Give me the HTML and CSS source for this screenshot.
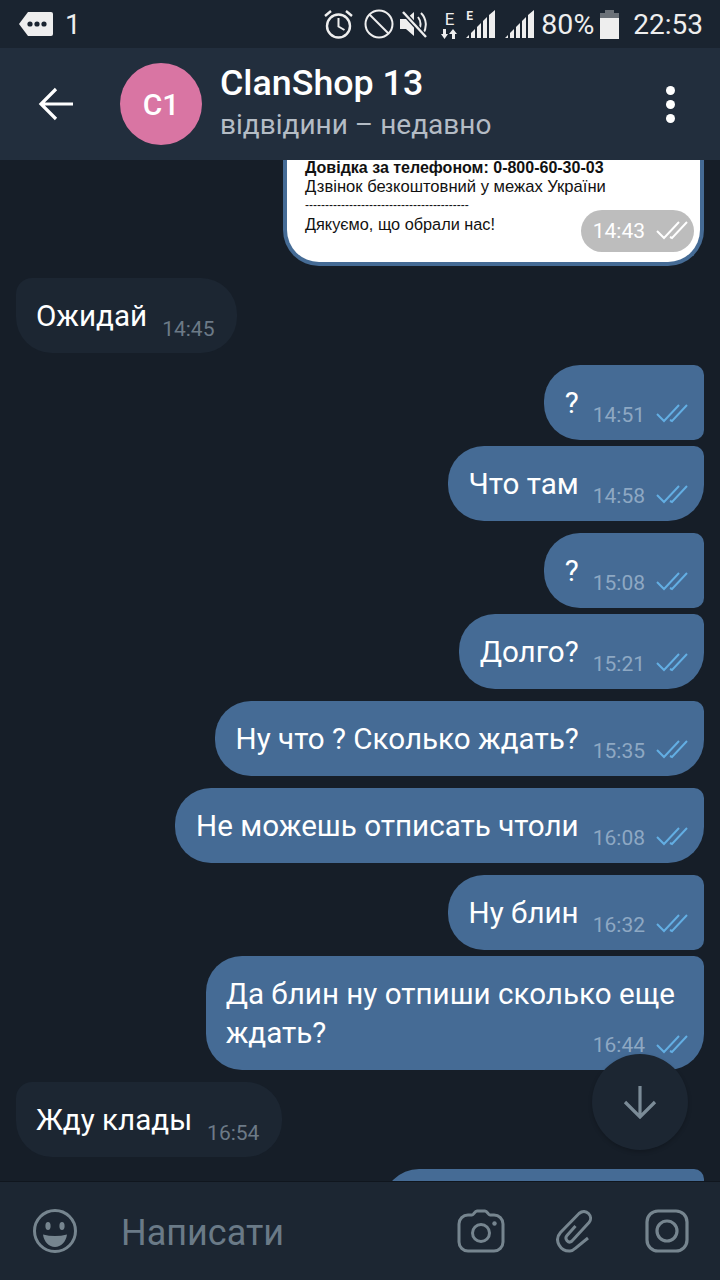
FILE: index.html
```html
<!DOCTYPE html>
<html lang="en">
<head>
  <meta charset="UTF-8" />
  <meta name="viewport" content="width=device-width, initial-scale=1.0" />
  <title>ClanShop 13</title>
  <link rel="stylesheet" href="styles.css">
</head>
<body>
  <svg class="sprite" width="0" height="0">
    <symbol id="ticks" viewBox="0 0 32 20">
      <path d="M1 11l7 7L23 2M14 17l2 1L31 2" fill="none" stroke="currentColor" stroke-width="2"/>
    </symbol>
    <symbol id="bars" viewBox="0 0 30 28">
      <path d="M0 28l3-3v3zM5 28v-5l4-4v9zM11 28V17l4-4v15zM17 28V11l4-4v21zM23 28V5l6-5v28z" fill="#eee"/>
    </symbol>
  </svg>

  <div class="app">
    <div class="statusbar">
      <div class="status-left">
        <svg class="st-note" viewBox="0 0 34 26"><path d="M9 1h23a2 2 0 0 1 2 2v20a2 2 0 0 1-2 2H9L0 13z" fill="#eee"/><circle cx="11" cy="13" r="2.6" fill="#1a2430"/><circle cx="18" cy="13" r="2.6" fill="#1a2430"/><circle cx="25" cy="13" r="2.6" fill="#1a2430"/></svg>
        <span>1</span>
      </div>
      <div class="status-right">
        <svg class="st-alarm" viewBox="0 0 29 30"><circle cx="14.5" cy="17" r="11.5" fill="none" stroke="#eee" stroke-width="2.4"/><path d="M14.5 9v8.500l6 3.500" fill="none" stroke="#eee" stroke-width="2"/><path d="M1 7l6-5M28 7l-6-5" stroke="#eee" stroke-width="2.400"/></svg>
        <svg class="st-block" viewBox="0 0 30 30"><circle cx="15" cy="15" r="13.500" fill="none" stroke="#eee" stroke-width="2"/><path d="M5.500 5.500l19 19" stroke="#eee" stroke-width="2"/></svg>
        <svg class="st-mute" viewBox="0 0 27 28"><path d="M0 9h6l8-7v24l-8-7H0z" fill="#eee"/><path d="M18 7c3 4 3 9 1 13M21 3c6 6 6 15 2 21" fill="none" stroke="#eee" stroke-width="2"/><path d="M3 2l23 25" stroke="#1a2430" stroke-width="5"/><path d="M3 2l23 25" stroke="#eee" stroke-width="2.400"/></svg>
        <div class="st-net">
          <span class="st-e">E</span>
          <svg viewBox="0 0 16 10"><path d="M3.500 10L0 5h2V0h3v5h2zM12 0l4 5h-2v5h-3V5H8z" fill="#eee"/></svg>
        </div>
        <div class="st-signal">
          <span class="st-e2">E</span>
          <svg class="st-bars"><use href="#bars"/></svg>
        </div>
        <svg class="st-bars"><use href="#bars"/></svg>
        <span class="st-pct">80%</span>
        <svg class="st-batt" viewBox="0 0 19 29"><path d="M5 0h9v3h5v5H0V3h5z" fill="#6b7178"/><path d="M0 8h19v21H0z" fill="#eee"/></svg>
        <span class="st-time">22:53</span>
      </div>
    </div>

    <header class="topbar">
      <svg class="back" viewBox="0 0 36 34"><path d="M35 17H3M18 2L3 17l15 15" fill="none" stroke="#fff" stroke-width="3.200"/></svg>
      <div class="avatar">C1</div>
      <div class="peer">
        <div class="peer-name">ClanShop 13</div>
        <div class="peer-seen">відвідини – недавно</div>
      </div>
      <div class="dots"><i></i><i></i><i></i></div>
    </header>

    <main class="chat">
      <div class="msg out photo">
        <div class="receipt">
          <div class="line"><b>Довідка за телефоном: 0-800-60-30-03</b></div>
          <div class="line wide">Дзвінок безкоштовний у межах України</div>
          <div class="line dash">-----------------------------------------</div>
          <div class="line">Дякуємо, що обрали нас!</div>
        </div>
        <div class="pill"><span>14:43</span><svg class="ticks"><use href="#ticks"/></svg></div>
      </div>

      <div class="msg in gap"><span class="txt">Ожидай</span><span class="meta"><span>14:45</span></span></div>

      <div class="msg out gap"><span class="txt">?</span><span class="meta"><span>14:51</span><svg class="ticks"><use href="#ticks"/></svg></span></div>
      <div class="msg out end"><span class="txt">Что там</span><span class="meta"><span>14:58</span><svg class="ticks"><use href="#ticks"/></svg></span></div>
      <div class="msg out gap"><span class="txt">?</span><span class="meta"><span>15:08</span><svg class="ticks"><use href="#ticks"/></svg></span></div>
      <div class="msg out end"><span class="txt">Долго?</span><span class="meta"><span>15:21</span><svg class="ticks"><use href="#ticks"/></svg></span></div>
      <div class="msg out gap end"><span class="txt">Ну что ? Сколько ждать?</span><span class="meta"><span>15:35</span><svg class="ticks"><use href="#ticks"/></svg></span></div>
      <div class="msg out gap end"><span class="txt">Не можешь отписать чтоли</span><span class="meta"><span>16:08</span><svg class="ticks"><use href="#ticks"/></svg></span></div>
      <div class="msg out gap"><span class="txt">Ну блин</span><span class="meta"><span>16:32</span><svg class="ticks"><use href="#ticks"/></svg></span></div>
      <div class="msg out end two"><span class="txt">Да блин ну отпиши сколько еще<br>ждать?</span><span class="meta"><span>16:44</span><svg class="ticks"><use href="#ticks"/></svg></span></div>

      <div class="msg in gap"><span class="txt">Жду клады</span><span class="meta"><span>16:54</span></span></div>
      <div class="msg out gap stub"></div>

      <div class="scroll-down">
        <svg viewBox="0 0 34 34"><path d="M17 1v30M2 17l15 15 15-15" fill="none" stroke="#7b8b97" stroke-width="3.200"/></svg>
      </div>
    </main>

    <footer class="composer">
      <svg class="ic-smile" viewBox="0 0 44 44"><circle cx="22" cy="22" r="20.500" fill="none" stroke="#76858f" stroke-width="3"/><ellipse cx="15" cy="17" rx="2.600" ry="4" fill="#76858f"/><ellipse cx="29" cy="17" rx="2.600" ry="4" fill="#76858f"/><path d="M10 25.500q12 3 24 0C33 33 28 38 22 38S11 33 10 25.500z" fill="#76858f"/></svg>
      <div class="placeholder">Написати</div>
      <svg class="ic-cam" viewBox="0 0 48 44"><path d="M15 6c2 0 2.500-4 5-4h8c2.500 0 3 4 5 4h4a9 9 0 0 1 9 9v18a9 9 0 0 1-9 9H11a9 9 0 0 1-9-9V15a9 9 0 0 1 9-9z" fill="none" stroke="#76858f" stroke-width="3"/><circle cx="24" cy="24" r="8.500" fill="none" stroke="#76858f" stroke-width="3"/><circle cx="37.500" cy="14.500" r="2.200" fill="#76858f"/></svg>
      <svg class="ic-clip" viewBox="0 0 38 44"><path d="M19.500 17L11 26.500c-3 3.500 1.500 8.500 5 5.500L33 13.500c5-6-3-15-10-9L4.500 23.500c-7 8 0 19 9.500 18.500 2 0 3.500-1 5-2.500L32 29" fill="none" stroke="#76858f" stroke-width="3"/></svg>
      <svg class="ic-round" viewBox="0 0 44 44"><rect x="2" y="2" width="40" height="40" rx="11" fill="none" stroke="#76858f" stroke-width="3.200"/><circle cx="22" cy="22" r="10" fill="none" stroke="#76858f" stroke-width="3.200"/></svg>
    </footer>
  </div>
</body>
</html>
```

FILE: styles.css
```css
* {
  box-sizing: border-box;
}

body {
  margin: 0;
  font-family: Roboto, sans-serif;
  background: #161e28;
  color: #fff;
}

.sprite {
  display: block;
  position: absolute;
}

.app {
  width: 720px;
  height: 1280px;
  display: flex;
  flex-direction: column;
  overflow: hidden;
}

/* status bar */
.statusbar {
  height: 48px;
  flex: none;
  background: #1a2430;
  color: #eee;
  display: flex;
  justify-content: space-between;
  align-items: center;
  padding: 0 17px 0 19px;
}

.status-left {
  display: flex;
  align-items: center;
  gap: 12px;
  font-size: 28px;
}

.st-note {
  width: 34px;
  height: 26px;
}

.status-right {
  display: flex;
  align-items: center;
  gap: 9px;
}

.st-alarm {
  width: 29px;
  height: 30px;
}

.st-block {
  width: 30px;
  height: 30px;
  margin-left: 2px;
}

.st-mute {
  width: 27px;
  height: 28px;
  margin: 0 3px 0 -3px;
}

.st-net {
  width: 18px;
  display: flex;
  flex-direction: column;
  align-items: flex-end;
  margin-top: 1px;
}

.st-e {
  font-size: 17px;
  line-height: 16px;
  margin-right: 3px;
}

.st-net svg {
  width: 16px;
  height: 10px;
  margin-top: 2px;
}

.st-signal {
  position: relative;
  width: 30px;
  height: 28px;
}

.st-e2 {
  position: absolute;
  left: 0;
  top: -1px;
  font-size: 12px;
  font-weight: 700;
  line-height: 14px;
}

.st-bars {
  width: 30px;
  height: 28px;
  display: block;
}

.st-pct {
  font-size: 28.500px;
  margin-left: -3px;
}

.st-batt {
  width: 19px;
  height: 29px;
  margin-left: -3px;
}

.st-time {
  font-size: 28px;
  margin-left: 5px;
}

/* header */
.topbar {
  height: 112px;
  flex: none;
  background: #222e3d;
  display: flex;
  align-items: center;
  padding-left: 38px;
  position: relative;
  z-index: 2;
}

.back {
  width: 36px;
  height: 34px;
  margin-right: 46px;
}

.avatar {
  width: 82px;
  height: 82px;
  border-radius: 50%;
  background: #d975a3;
  display: flex;
  align-items: center;
  justify-content: center;
  font-size: 30px;
  font-weight: 500;
  margin-right: 18px;
}

.peer {
  flex: 1;
}

.peer-name {
  font-size: 35.800px;
  font-weight: 500;
  line-height: 38px;
  margin-bottom: 4px;
}

.peer-seen {
  font-size: 28px;
  line-height: 38px;
  color: #b4bcc5;
}

.dots {
  display: flex;
  flex-direction: column;
  gap: 5px;
  margin-right: 45px;
}

.dots i {
  display: block;
  width: 9px;
  height: 9px;
  border-radius: 50%;
  background: #fff;
}

/* messages */
.chat {
  flex: 1;
  min-height: 0;
  overflow: hidden;
  position: relative;
  display: flex;
  flex-direction: column;
  padding: 0 16px;
  background: #161e28;
}

.msg {
  height: 75px;
  flex: none;
  display: flex;
  align-items: center;
  gap: 14px;
  padding: 0 16px 0 21px;
  font-size: 29.600px;
  margin-top: 6px;
}

.msg.gap {
  margin-top: 12px;
}

.msg.out {
  align-self: flex-end;
  background: #456b95;
  border-radius: 36px 10px 10px 36px;
}

.msg.out.end {
  border-bottom-right-radius: 36px;
}

.msg.in {
  align-self: flex-start;
  background: #1c2632;
  border-radius: 16px 36px 36px 36px;
  gap: 15px;
  padding: 0 23px 0 20px;
}

.txt {
  line-height: 39px;
  margin-top: 1px;
}

.meta {
  display: flex;
  align-items: center;
  gap: 11px;
  font-size: 21px;
  line-height: 26px;
  color: #8ea8c3;
  margin-top: 24px;
}

.msg.in .meta {
  color: #6c7a87;
  margin-top: 27px;
}

.ticks {
  width: 32px;
  height: 20px;
  margin-top: -3px;
  color: #63aee3;
}

.msg.two {
  height: 114px;
  display: block;
  padding: 19px 16px 0 20px;
  position: relative;
}

.msg.two .txt {
  display: block;
  margin: 0 13px 0 0;
}

.msg.two .meta {
  justify-content: flex-end;
  margin-top: -21px;
}

.stub {
  width: 321px;
  height: 40px;
  border-radius: 36px 10px 0 0 !important;
}

/* receipt photo bubble */
.msg.photo {
  display: block;
  width: 421px;
  height: 106px;
  margin-top: 0;
  padding: 0;
  background: #fff;
  border: 4px solid #456b95;
  border-top: 0;
  border-radius: 0 0 36px 36px;
  position: relative;
  color: #111;
}

.receipt {
  font-family: "Liberation Sans", Arial, sans-serif;
  font-size: 16.300px;
  padding: 0 0 0 18px;
  margin-top: -2px;
  color: #111;
}

.line {
  height: 19px;
  line-height: 19px;
}

.line b {
  font-size: 16px;
}

.line.wide {
  font-size: 16.600px;
}

.dash {
  font-size: 12px;
}

.pill {
  position: absolute;
  right: 6px;
  bottom: 10px;
  height: 42px;
  display: flex;
  align-items: center;
  gap: 11px;
  padding: 0 6px 0 12px;
  border-radius: 21px;
  background: #bdbdbd;
  color: #fff;
  font-size: 21px;
}

.pill .ticks {
  color: #fff;
}

.scroll-down {
  position: absolute;
  left: 592px;
  top: 894px;
  width: 96px;
  height: 96px;
  border-radius: 50%;
  background: #1c2632;
  box-shadow: 0 2px 4px rgba(0, 0, 0, 0.2);
  display: flex;
  align-items: center;
  justify-content: center;
}

.scroll-down svg {
  width: 34px;
  height: 34px;
}

/* bottom input */
.composer {
  height: 99px;
  flex: none;
  background: #1c2632;
  border-top: 1px solid #10161e;
  display: flex;
  align-items: center;
  padding-left: 33px;
  position: relative;
}

.ic-smile {
  width: 44px;
  height: 44px;
  margin-right: 44px;
}

.placeholder {
  flex: 1;
  font-size: 36px;
  padding-top: 3px;
  color: #6a7a87;
}

.ic-cam {
  width: 48px;
  height: 44px;
  margin-right: 51px;
}

.ic-clip {
  width: 38px;
  height: 44px;
  margin-right: 51px;
}

.ic-round {
  width: 44px;
  height: 44px;
  margin-right: 31px;
}
```
